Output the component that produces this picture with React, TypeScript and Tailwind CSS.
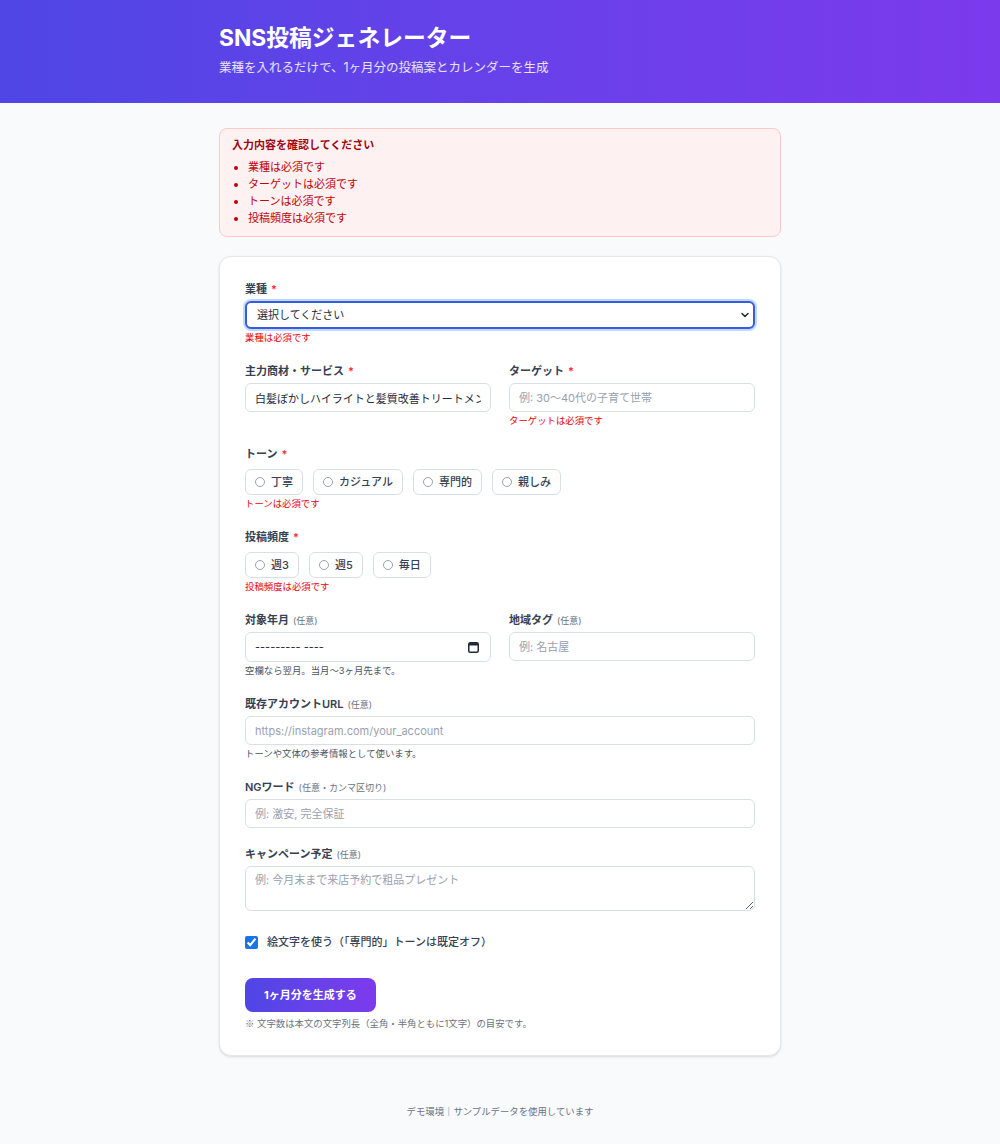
import { ChevronDown } from 'lucide-react';

const tones = ['丁寧', 'カジュアル', '専門的', '親しみ'];
const freqs = ['週3', '週5', '毎日'];
const errors = ['業種は必須です', 'ターゲットは必須です', 'トーンは必須です', '投稿頻度は必須です'];

const inputCls =
  'block w-full h-[29px] rounded-md border border-[#d9dee7] bg-white px-[9px] text-[11px] text-gray-800 placeholder:text-gray-400 outline-none';

function Label({ text, required, optional }: { text: string; required?: boolean; optional?: string }) {
  return (
    <label className="mb-1 block h-4 text-[11px] leading-4 font-semibold text-gray-700">
      {text}
      {required && <span className="ml-1 leading-none text-red-500">*</span>}
      {optional && <span className="ml-1 text-[9px] leading-none font-normal text-gray-500">({optional})</span>}
    </label>
  );
}

function FieldError({ children }: { children: string }) {
  return <p className="mt-[2px] text-[9.4px] leading-[14px] text-red-600">{children}</p>;
}

function Hint({ children }: { children: string }) {
  return <p className="mt-[2px] text-[9.4px] leading-[14px] text-gray-600">{children}</p>;
}

function Pills({ name, items }: { name: string; items: string[] }) {
  return (
    <div className="flex gap-[10px]">
      {items.map((item) => (
        <label
          key={item}
          className="flex h-[26px] items-center gap-[6px] rounded-md border border-[#d9dee7] bg-white px-[9px] text-[11px] font-medium text-gray-700"
        >
          <input
            type="radio"
            name={name}
            className="h-[10px] w-[10px] appearance-none rounded-full border border-gray-400 bg-white"
          />
          {item}
        </label>
      ))}
    </div>
  );
}

// month picker look-alike: empty value with the calendar button on the right
function MonthField() {
  return (
    <div className="relative">
      <input className={inputCls + ' h-[30px] placeholder:text-gray-800'} placeholder="--------- ----" readOnly />
      <svg
        className="pointer-events-none absolute top-[9px] right-[12px]"
        width="11"
        height="12"
        viewBox="0 0 11 12"
        fill="none"
      >
        <rect x="0.75" y="1.75" width="9.5" height="9.5" rx="1.5" stroke="#1f2937" strokeWidth="1.5" />
        <rect x="1" y="2" width="9" height="2.5" fill="#1f2937" />
      </svg>
    </div>
  );
}

export default function App() {
  return (
    <div
      className="min-h-screen bg-[#f8fafc] text-gray-800"
      style={{ fontFamily: 'Inter, "Noto Sans CJK JP", sans-serif' }}
    >
      <header className="bg-gradient-to-r from-[#4f46e5] to-[#7c3aed] text-white">
        <div className="mx-auto w-[562px] pt-[22px] pb-[25px]">
          <h1 className="text-[22.8px] leading-8 font-bold">SNS投稿ジェネレーター</h1>
          <p className="mt-1 text-[12.5px] leading-5 text-white/85">
            業種を入れるだけで、1ヶ月分の投稿案とカレンダーを生成
          </p>
        </div>
      </header>

      <main className="mx-auto w-[562px] pt-[25px] pb-8">
        {/* validation summary */}
        <div className="mb-[19px] rounded-lg border border-red-200 bg-[#fef1f1] px-3 pt-2 pb-[9px]">
          <p className="mb-1.5 text-[11px] leading-4 font-semibold text-red-800">入力内容を確認してください</p>
          <ul className="list-disc pl-4 text-[11px] leading-[17px] text-red-700">
            {errors.map((e) => (
              <li key={e}>{e}</li>
            ))}
          </ul>
        </div>

        <form className="rounded-xl border border-gray-200 bg-white px-[25px] py-6 shadow-sm">
          <div className="mb-[18px]">
            <Label text="業種" required />
            <div className="relative">
              <select className="block h-[28px] w-full appearance-none rounded-md border-2 border-[#3b5bdb] bg-white px-[10px] text-[11px] text-gray-800 ring-2 ring-blue-200 outline-none">
                <option>選択してください</option>
                <option>美容室・ヘアサロン</option>
                <option>飲食店</option>
              </select>
              <ChevronDown className="pointer-events-none absolute top-[8px] right-[4px] h-3 w-3 text-gray-800" strokeWidth={3} />
            </div>
            <FieldError>業種は必須です</FieldError>
          </div>

          <div className="mb-[18px] grid grid-cols-2 gap-[18px]">
            <div>
              <Label text="主力商材・サービス" required />
              <input className={inputCls} defaultValue="白髪ぼかしハイライトと髪質改善トリートメント" />
            </div>
            <div>
              <Label text="ターゲット" required />
              <input className={inputCls} placeholder="例: 30〜40代の子育て世帯" />
              <FieldError>ターゲットは必須です</FieldError>
            </div>
          </div>

          <div className="mb-[18px]">
            <div className="mb-[7px] h-4">
              <Label text="トーン" required />
            </div>
            <Pills name="tone" items={tones} />
            <FieldError>トーンは必須です</FieldError>
          </div>

          <div className="mb-[18px]">
            <div className="mb-[7px] h-4">
              <Label text="投稿頻度" required />
            </div>
            <Pills name="freq" items={freqs} />
            <FieldError>投稿頻度は必須です</FieldError>
          </div>

          <div className="mb-[18px] grid grid-cols-2 gap-[18px]">
            <div>
              <Label text="対象年月" optional="任意" />
              <MonthField />
              <Hint>空欄なら翌月。当月〜3ヶ月先まで。</Hint>
            </div>
            <div>
              <Label text="地域タグ" optional="任意" />
              <input className={inputCls} placeholder="例: 名古屋" />
            </div>
          </div>

          <div className="mb-[18px]">
            <Label text="既存アカウントURL" optional="任意" />
            <input className={inputCls} placeholder="https://instagram.com/your_account" />
            <Hint>トーンや文体の参考情報として使います。</Hint>
          </div>

          <div className="mb-[18px]">
            <Label text="NGワード" optional="任意・カンマ区切り" />
            <input className={inputCls} placeholder="例: 激安, 完全保証" />
          </div>

          <div className="mb-[21px]">
            <Label text="キャンペーン予定" optional="任意" />
            <textarea
              className="block h-[45px] w-full rounded-md border border-[#d9dee7] bg-white px-[9px] py-[5px] text-[11px] text-gray-800 placeholder:text-gray-400 outline-none"
              placeholder="例: 今月末まで来店予約で粗品プレゼント"
            />
          </div>

          <label className="mb-[26px] flex h-5 items-center gap-[9px] text-[11px] font-medium text-gray-700">
            <input type="checkbox" defaultChecked className="m-0 h-[13px] w-[13px] accent-[#1a73e8]" />
            絵文字を使う（「専門的」トーンは既定オフ）
          </label>

          <button
            type="button"
            className="h-[34px] rounded-lg bg-gradient-to-r from-[#4f46e5] to-[#7c3aed] px-[19px] text-[11px] font-bold text-white"
          >
            1ヶ月分を生成する
          </button>
          <p className="mt-1 text-[9.4px] leading-[14px] text-gray-500">
            <span className="font-['Noto_Sans_CJK_JP']">※</span> 文字数は本文の文字列長（全角・半角ともに1文字）の目安です。
          </p>
        </form>
      </main>

      <footer className="pt-4 pb-6 text-center text-[9.4px] leading-4 text-gray-500">
        デモ環境｜サンプルデータを使用しています
      </footer>
    </div>
  );
}
